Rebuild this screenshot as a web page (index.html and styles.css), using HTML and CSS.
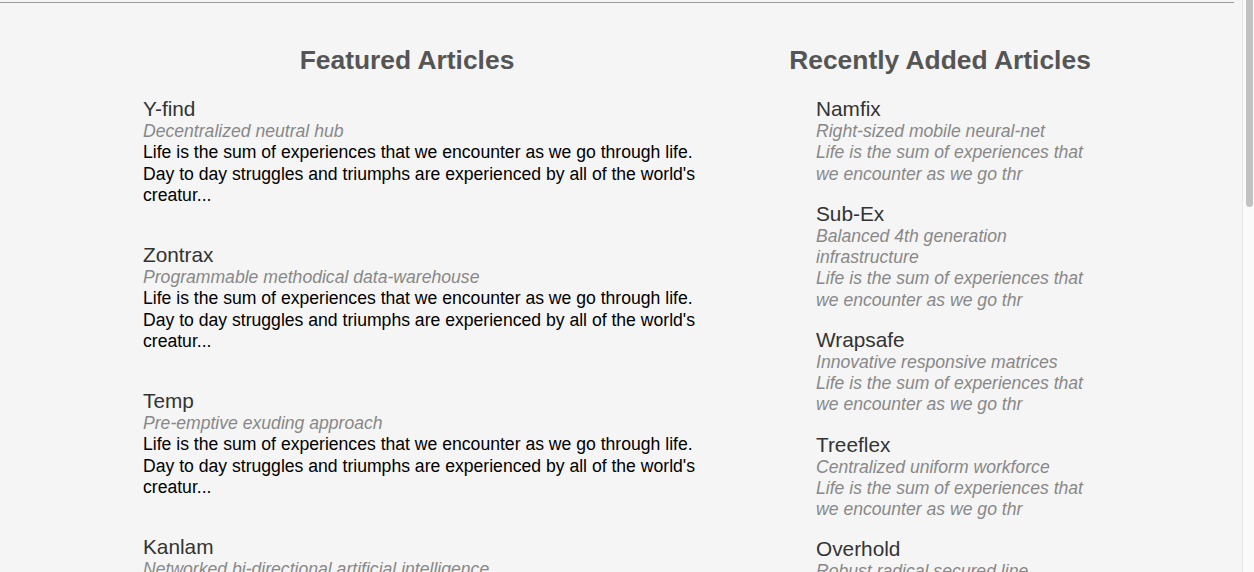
FILE: index.html
```html
<!DOCTYPE html>
<html>
<head>
<meta charset="utf-8">
<title>Articles</title>
<link rel="stylesheet" href="styles.css">
</head>
<body>
<div class="topline"></div>
<main class="columns">
  <section class="col col-featured">
    <h2 class="col-title">Featured Articles</h2>
    <ul class="list">
      <li class="item">
        <div class="item-title">Y-find</div>
        <div class="item-sub">Decentralized neutral hub</div>
        <div class="item-body">Life is the sum of experiences that we encounter as we go through life. Day to day struggles and triumphs are experienced by all of the world's creatur...</div>
      </li>
      <li class="item">
        <div class="item-title">Zontrax</div>
        <div class="item-sub">Programmable methodical data-warehouse</div>
        <div class="item-body">Life is the sum of experiences that we encounter as we go through life. Day to day struggles and triumphs are experienced by all of the world's creatur...</div>
      </li>
      <li class="item">
        <div class="item-title">Temp</div>
        <div class="item-sub">Pre-emptive exuding approach</div>
        <div class="item-body">Life is the sum of experiences that we encounter as we go through life. Day to day struggles and triumphs are experienced by all of the world's creatur...</div>
      </li>
      <li class="item">
        <div class="item-title">Kanlam</div>
        <div class="item-sub">Networked bi-directional artificial intelligence</div>
        <div class="item-body">Life is the sum of experiences that we encounter as we go through life. Day to day struggles and triumphs are experienced by all of the world's creatur...</div>
      </li>
    </ul>
  </section>
  <section class="col col-recent">
    <h2 class="col-title">Recently Added Articles</h2>
    <ul class="list">
      <li class="item">
        <div class="item-title">Namfix</div>
        <div class="item-sub">Right-sized mobile neural-net</div>
        <div class="item-sub">Life is the sum of experiences that we encounter as we go thr</div>
      </li>
      <li class="item">
        <div class="item-title">Sub-Ex</div>
        <div class="item-sub">Balanced 4th generation infrastructure</div>
        <div class="item-sub">Life is the sum of experiences that we encounter as we go thr</div>
      </li>
      <li class="item">
        <div class="item-title">Wrapsafe</div>
        <div class="item-sub">Innovative responsive matrices</div>
        <div class="item-sub">Life is the sum of experiences that we encounter as we go thr</div>
      </li>
      <li class="item">
        <div class="item-title">Treeflex</div>
        <div class="item-sub">Centralized uniform workforce</div>
        <div class="item-sub">Life is the sum of experiences that we encounter as we go thr</div>
      </li>
      <li class="item">
        <div class="item-title">Overhold</div>
        <div class="item-sub">Robust radical secured line</div>
        <div class="item-sub">Life is the sum of experiences that we encounter as we go thr</div>
      </li>
    </ul>
  </section>
</main>
<div class="scrollbar"><div class="scroll-thumb"></div></div>
</body>
</html>
```

FILE: styles.css
```css
html, body {
  margin: 0;
  padding: 0;
  height: 100%;
}
body {
  background: #f5f5f5;
  font-family: "Liberation Sans", Arial, Helvetica, sans-serif;
  font-size: 17.6px;
  color: #000;
  overflow: hidden;
}
.topline {
  margin-top: 2px;
  width: 1234px;
  height: 1px;
  background: #9a9a9a;
}
.columns {
  display: grid;
  grid-template-columns: 608px 328px;
  column-gap: 65px;
  padding-left: 103px;
}
.col-title {
  margin: 42px 0 22px;
  font-size: 26.4px;
  line-height: 30px;
  font-weight: bold;
  color: #555;
  text-align: center;
}
.list {
  list-style: none;
  margin: 0;
  padding: 0 0 0 40px;
}
.col-featured .item {
  margin-bottom: 37px;
}
.col-recent .item {
  margin-bottom: 17px;
}
.item-title {
  font-size: 20.8px;
  line-height: 24px;
  color: #333;
}
.item-sub {
  font-style: italic;
  color: #888;
  line-height: 21.25px;
}
.item-body {
  line-height: 21.25px;
  color: #000;
}
.scrollbar {
  position: fixed;
  top: 0;
  right: 0;
  width: 11px;
  height: 100%;
  background: #fafafa;
  border-left: 1px solid #e6e6e6;
}
.scroll-thumb {
  position: absolute;
  top: 0;
  left: 3px;
  width: 7px;
  height: 207px;
  border-radius: 0 0 4px 4px;
  background: #c2c2c2;
}
```
